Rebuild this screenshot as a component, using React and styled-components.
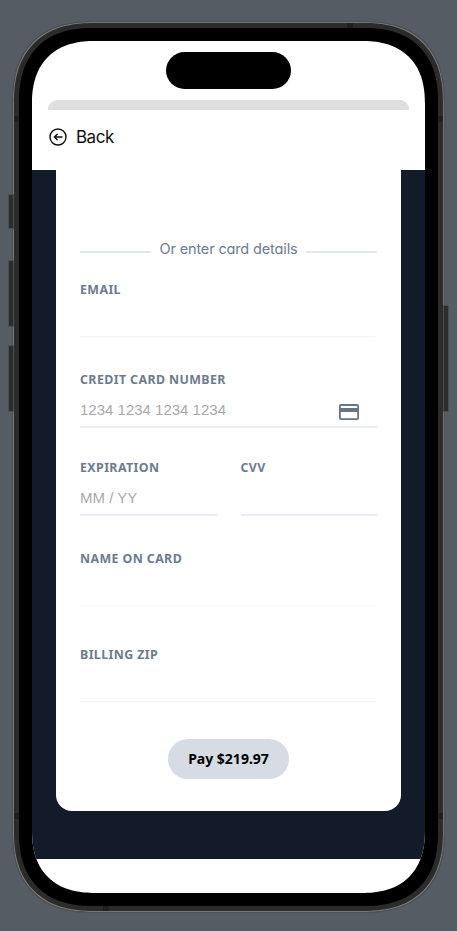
import React from "react";
import styled, { createGlobalStyle } from "styled-components";

const Global = createGlobalStyle`
  * { box-sizing: border-box; }
  body { margin: 0; background: #555c64; }
`;

const Stage = styled.main`
  width: 457px;
  height: 931px;
  padding: 22px 0 0 13px;
  background: #555c64;
  overflow: hidden;
`;

const Phone = styled.div`
  position: relative;
  width: 431px;
  height: 890px;
  padding: 6px;
  border-radius: 80px;
  corner-shape: superellipse(1.25);
  background: #2b2b2b;
  box-shadow: inset 0 0 0 1px #777776, 0 0 0 1px #4b5157;
`;

const SideButton = styled.div`
  position: absolute;
  top: ${(p) => p.$top}px;
  ${(p) => p.$side}: -4px;
  width: 4px;
  height: ${(p) => p.$length}px;
  background: #2c2c2b;
  box-shadow: 0 0 0 1px #4a4f54;
`;

const AntennaBand = styled.div`
  position: absolute;
  ${(p) => p.$edge}: 1px;
  ${(p) => (p.$from)}: ${(p) => p.$at}px;
  width: ${(p) => (p.$from === "top" ? 5 : 6)}px;
  height: ${(p) => (p.$from === "top" ? 6 : 5)}px;
  background: #1f1f1f;
`;

const Bezel = styled.div`
  height: 878px;
  padding: 13px;
  border-radius: 74px;
  corner-shape: superellipse(1.25);
  background: #000;
`;

const Screen = styled.div`
  position: relative;
  display: flex;
  flex-direction: column;
  height: 852px;
  border-radius: 63px;
  corner-shape: superellipse(1.25);
  overflow: hidden;
  background: #fff;
`;

const Island = styled.div`
  position: absolute;
  top: 11px;
  left: 134px;
  width: 125px;
  height: 37px;
  border-radius: 19px;
  background: #000;
`;

const SheetBehind = styled.div`
  height: 10px;
  margin: 59px 16px 0;
  border-radius: 9px 9px 0 0;
  background: #dfdfdf;
`;

const Header = styled.header`
  display: flex;
  align-items: center;
  height: 60px;
  padding: 0 0 7px 17px;
  gap: 9px;
  font: 400 17px/24px Inter, sans-serif;
  letter-spacing: -0.5px;
  color: #111;
`;

const Backdrop = styled.section`
  height: 689px;
  padding: 0 24px 48px;
  background: #131a29;
`;

const Card = styled.form`
  display: flex;
  flex-direction: column;
  height: 641px;
  padding: 69px 24px 0;
  border-radius: 0 0 16px 16px;
  background: #fff;
`;

const Divider = styled.div`
  display: flex;
  align-items: center;
  gap: 8px;
  height: 20px;
  color: #6c7b92;
  font: 400 14.5px/20px Inter, sans-serif;
  font-feature-settings: "cv11";
  letter-spacing: -0.14px;
  white-space: nowrap;

  &::before,
  &::after {
    content: "";
    flex: 1;
    height: 2px;
    margin-top: 5px;
    background: #e1e7f1;
  }
`;

const Field = styled.label`
  display: flex;
  flex-direction: column;
  flex: ${(p) => (p.$grow ? "1" : "none")};
  height: ${(p) => p.$height}px;
  margin-top: ${(p) => p.$gap || 0}px;
  border-bottom: ${(p) => p.$weight || 1}px solid ${(p) => p.$line || "#f2f5f7"};
`;

const Label = styled.span`
  font: 700 12.4px/16px "Noto Sans", sans-serif;
  letter-spacing: 0.4px;
  color: #6c7b92;
`;

const Entry = styled.span`
  display: flex;
  justify-content: space-between;
  margin-top: 12px;
  padding-right: 18px;
  font: 400 15px/20px "Liberation Sans", sans-serif;
  color: #a9a9a9;

  svg { margin-top: 4px; }
`;

const Row = styled.div`
  display: flex;
  gap: 24px;
  margin-top: 32px;
`;

const PayButton = styled.button`
  align-self: center;
  width: 121px;
  height: 40px;
  margin-top: 37px;
  padding: 0;
  border: 0;
  border-radius: 20px;
  background: #d6dce4;
  color: #000;
  font: 700 14px/20px "Noto Sans", sans-serif;
`;

const BackIcon = () => (
  <svg width="18" height="18" viewBox="0 0 18 18" fill="none" stroke="#111" strokeWidth="1.4" strokeLinecap="round" strokeLinejoin="round">
    <circle cx="9" cy="9" r="8" />
    <path d="M13 9H5.4M8.2 6.2L5.4 9l2.8 2.8" />
  </svg>
);

const CardIcon = () => (
  <svg width="20" height="16" viewBox="0 0 20 16" fill="#64748b">
    <path fillRule="evenodd" d="M2 0H18a2 2 0 0 1 2 2V14a2 2 0 0 1-2 2H2a2 2 0 0 1-2-2V2a2 2 0 0 1 2-2ZM1.8 2V4H18.2V2ZM1.8 8V14.2H18.2V8Z" />
  </svg>
);

export default function App() {
  return (
    <Stage>
      <Global />
      <Phone>
        <SideButton $side="left" $top={173} $length={33} />
        <SideButton $side="left" $top={239} $length={65} />
        <SideButton $side="left" $top={324} $length={65} />
        <SideButton $side="right" $top={284} $length={105} />
        <AntennaBand $edge="left" $from="top" $at={94} />
        <AntennaBand $edge="right" $from="top" $at={94} />
        <AntennaBand $edge="left" $from="top" $at={791} />
        <AntennaBand $edge="right" $from="top" $at={791} />
        <AntennaBand $edge="top" $from="left" $at={334} />
        <AntennaBand $edge="bottom" $from="left" $at={90} />
        <Bezel>
          <Screen>
            <Island />
            <SheetBehind />
            <Header>
              <BackIcon />
              Back
            </Header>
            <Backdrop>
              <Card>
                <Divider>Or enter card details</Divider>
                <Field $height={55} $gap={23}>
                  <Label>EMAIL</Label>
                </Field>
                <Field $height={56} $gap={35} $weight={2} $line="#eceef5">
                  <Label>CREDIT CARD NUMBER</Label>
                  <Entry>
                    1234 1234 1234 1234
                    <CardIcon />
                  </Entry>
                </Field>
                <Row>
                  <Field $grow $height={56} $weight={2} $line="#eceef5">
                    <Label>EXPIRATION</Label>
                    <Entry>MM / YY</Entry>
                  </Field>
                  <Field $grow $height={56} $weight={2} $line="#eceef5">
                    <Label>CVV</Label>
                  </Field>
                </Row>
                <Field $height={55} $gap={35} $line="#f6f7f8">
                  <Label>NAME ON CARD</Label>
                </Field>
                <Field $height={55} $gap={41}>
                  <Label>BILLING ZIP</Label>
                </Field>
                <PayButton type="button">Pay $219.97</PayButton>
              </Card>
            </Backdrop>
          </Screen>
        </Bezel>
      </Phone>
    </Stage>
  );
}
